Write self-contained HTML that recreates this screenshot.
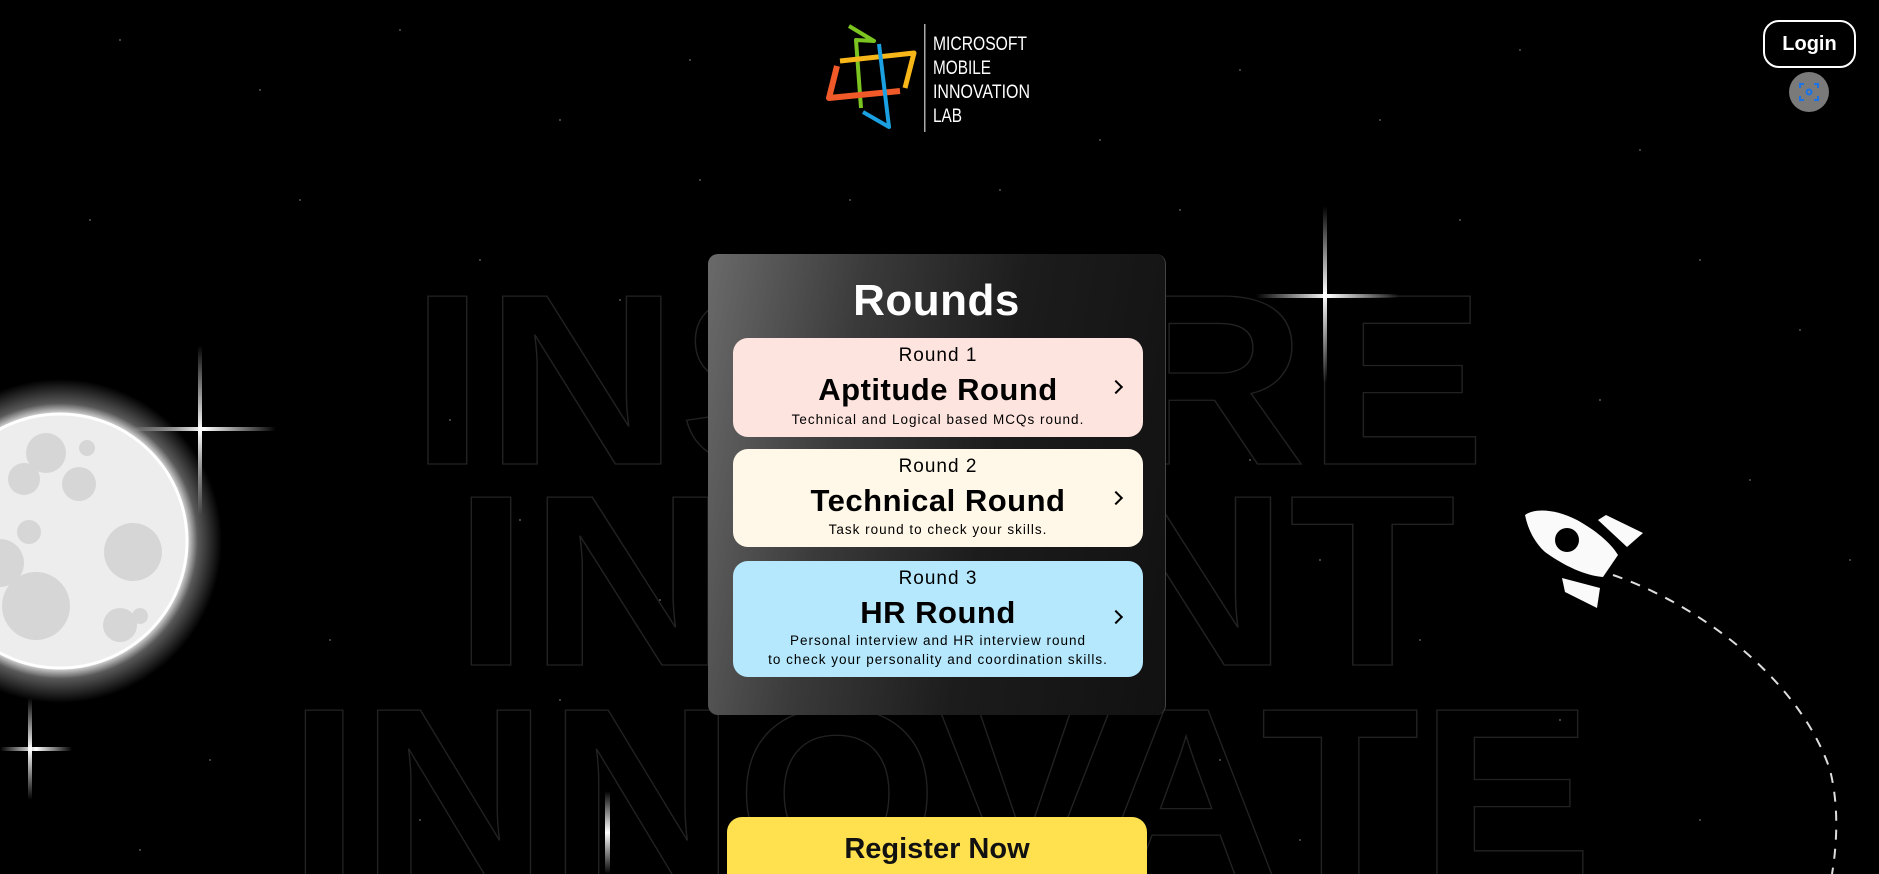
<!DOCTYPE html>
<html><head><meta charset="utf-8"><style>
*{margin:0;padding:0;box-sizing:border-box}
html,body{width:1879px;height:874px;overflow:hidden}
body{background:#000;font-family:"Liberation Sans",sans-serif;position:relative}
.abs{position:absolute}
.card{left:708px;top:254px;width:458px;height:461px;border-radius:10px;background:linear-gradient(100deg,#6a6a6a 0%,#3a3a3a 30%,#1c1c1c 60%,#111 100%);border-right:1px solid #444}
.card h1{position:absolute;top:22px;width:100%;text-align:center;color:#fff;font-size:44px;font-weight:bold;letter-spacing:0.5px}
.box{position:absolute;left:25px;width:410px;border-radius:15px;text-align:center;color:#000}
.box .r{font-size:19px;letter-spacing:1px;position:absolute;width:100%}
.box .t{font-size:31px;font-weight:bold;position:absolute;width:100%;letter-spacing:0.5px}
.box .d{font-size:13.5px;letter-spacing:1px;position:absolute;width:100%;line-height:19px}
.chev{position:absolute;right:22px;width:10px;height:10px;border-right:2.5px solid #000;border-top:2.5px solid #000;transform:rotate(45deg)}
</style></head><body>
<svg class="abs" style="left:0;top:0" width="1879" height="874">
<defs>
<radialGradient id="glow"><stop offset="0.78" stop-color="#fff" stop-opacity="0.9"/><stop offset="0.85" stop-color="#fff" stop-opacity="0.35"/><stop offset="1" stop-color="#fff" stop-opacity="0"/></radialGradient>
<linearGradient id="sv" x1="0" y1="0" x2="0" y2="1"><stop offset="0" stop-color="#fff" stop-opacity="0"/><stop offset="0.5" stop-color="#fff"/><stop offset="1" stop-color="#fff" stop-opacity="0"/></linearGradient>
<linearGradient id="sh" x1="0" y1="0" x2="1" y2="0"><stop offset="0" stop-color="#fff" stop-opacity="0"/><stop offset="0.5" stop-color="#fff"/><stop offset="1" stop-color="#fff" stop-opacity="0"/></linearGradient>
</defs>
<g fill="#555">
<circle cx="120" cy="40" r="1"/><circle cx="260" cy="90" r="1"/><circle cx="400" cy="30" r="1"/><circle cx="560" cy="120" r="1"/><circle cx="690" cy="60" r="1"/><circle cx="980" cy="40" r="1"/><circle cx="1100" cy="140" r="1"/><circle cx="1240" cy="70" r="1"/><circle cx="1380" cy="120" r="1"/><circle cx="1520" cy="50" r="1"/><circle cx="1640" cy="150" r="1"/><circle cx="1700" cy="260" r="1"/><circle cx="1800" cy="330" r="1"/><circle cx="1600" cy="400" r="1"/><circle cx="1750" cy="480" r="1"/><circle cx="1850" cy="560" r="1"/><circle cx="1560" cy="720" r="1"/><circle cx="1700" cy="820" r="1"/><circle cx="300" cy="200" r="1"/><circle cx="480" cy="260" r="1"/><circle cx="90" cy="220" r="1"/><circle cx="330" cy="640" r="1"/><circle cx="210" cy="760" r="1"/><circle cx="420" cy="820" r="1"/><circle cx="140" cy="850" r="1"/><circle cx="520" cy="520" r="1"/><circle cx="620" cy="300" r="1"/><circle cx="1250" cy="460" r="1"/><circle cx="1320" cy="560" r="1"/><circle cx="1420" cy="640" r="1"/><circle cx="1220" cy="760" r="1"/><circle cx="1460" cy="220" r="1"/><circle cx="700" cy="180" r="1"/><circle cx="850" cy="200" r="1"/><circle cx="1000" cy="190" r="1"/><circle cx="1180" cy="210" r="1"/><circle cx="450" cy="420" r="1"/><circle cx="560" cy="700" r="1"/><circle cx="660" cy="600" r="1"/><circle cx="1300" cy="840" r="1"/>
</g>
<g fill="none" stroke="#222" stroke-width="1.3" font-family="Liberation Sans" font-weight="bold" font-size="244">
<text x="410" y="464" textLength="1076" lengthAdjust="spacingAndGlyphs">INSPIRE</text>
<text x="453" y="665" textLength="1003" lengthAdjust="spacingAndGlyphs">INVENT</text>
<text x="288" y="878" textLength="1305" lengthAdjust="spacingAndGlyphs">INNOVATE</text>
</g>
<circle cx="60" cy="541" r="162" fill="url(#glow)"/>
<circle cx="60" cy="541" r="127" fill="#ededed" stroke="#fff" stroke-width="3"/>
<g fill="#d6d6d6">
<circle cx="46" cy="453" r="20"/><circle cx="24" cy="479" r="16"/><circle cx="79" cy="484" r="17"/><circle cx="87" cy="448" r="8"/><circle cx="29" cy="532" r="12"/><circle cx="133" cy="552" r="29"/><circle cx="36" cy="606" r="34"/><circle cx="0" cy="563" r="24"/><circle cx="120" cy="625" r="17"/><circle cx="140" cy="616" r="8"/>
</g>
<rect x="198" y="345" width="4" height="170" fill="url(#sv)"/><rect x="132" y="427" width="144" height="4" fill="url(#sh)"/>
<rect x="28" y="698" width="4" height="102" fill="url(#sv)"/><rect x="0" y="747" width="72" height="4" fill="url(#sh)"/>
<rect x="1323" y="206" width="4" height="177" fill="url(#sv)"/><rect x="1256" y="294" width="143" height="4" fill="url(#sh)"/>
<rect x="605" y="791" width="5" height="83" fill="url(#sv)"/>
<path d="M1613 575 C1700 605 1800 680 1830 770 C1840 810 1836 850 1832 874" fill="none" stroke="#ddd" stroke-width="2" stroke-dasharray="10 9"/>
<g fill="#fafafa">
<path d="M1525 515 C1535 508 1555 509 1577 520 C1595 530 1610 542 1618 555 L1603 577 C1590 576 1570 570 1545 552 C1535 543 1528 530 1525 515 Z"/>
<path d="M1598 520 L1606 515 L1643 533 L1627 547 Z"/>
<path d="M1562 578 L1600 588 L1597 608 L1565 592 Z"/>
</g>
<circle cx="1567" cy="540" r="12" fill="#000"/>
<g fill="none" stroke-linejoin="round">
<path d="M849 26 L874 41 L856 40 L861 108" stroke="#7cc520" stroke-width="4"/>
<path d="M840 61 L914 53 L905 88" stroke="#f7b718" stroke-width="5"/>
<path d="M837 66 L829 98 L900 91" stroke="#f05a28" stroke-width="6"/>
<path d="M879 44 L889 127 L863 112" stroke="#1ba1e2" stroke-width="4"/>
</g>
<rect x="924" y="24" width="1.5" height="108" fill="#aaa"/>
<g fill="#fff" font-family="Liberation Sans" font-size="19">
<text x="933" y="50" textLength="94" lengthAdjust="spacingAndGlyphs">MICROSOFT</text>
<text x="933" y="74" textLength="58" lengthAdjust="spacingAndGlyphs">MOBILE</text>
<text x="933" y="98" textLength="97" lengthAdjust="spacingAndGlyphs">INNOVATION</text>
<text x="933" y="122" textLength="29" lengthAdjust="spacingAndGlyphs">LAB</text>
</g>
<circle cx="1809" cy="92" r="20" fill="#7a7a7a"/>
<g fill="none" stroke="#1a73e8" stroke-width="2"><path d="M1800 88v-4h4M1814 84h4v4M1818 96v4h-4M1804 100h-4v-4"/><circle cx="1809" cy="92" r="2.5"/></g>
</svg>
<div class="abs" style="left:1763px;top:20px;width:93px;height:48px;border:2px solid #fff;border-radius:16px;color:#fff;font-weight:bold;font-size:20px;text-align:center;line-height:44px">Login</div>
<div class="abs card">
<h1>Rounds</h1>
<div class="box" style="top:84px;height:99px;background:#fee4df">
<div class="r" style="top:7px">Round 1</div><div class="t" style="top:34px">Aptitude Round</div><div class="d" style="top:72px">Technical and Logical based MCQs round.</div><div class="chev" style="top:44px"></div></div>
<div class="box" style="top:195px;height:98px;background:#fff8e8">
<div class="r" style="top:7px">Round 2</div><div class="t" style="top:34px">Technical Round</div><div class="d" style="top:71px">Task round to check your skills.</div><div class="chev" style="top:44px"></div></div>
<div class="box" style="top:307px;height:116px;background:#b5e8fd">
<div class="r" style="top:7px">Round 3</div><div class="t" style="top:34px">HR Round</div><div class="d" style="top:70px">Personal interview and HR interview round<br>to check your personality and coordination skills.</div><div class="chev" style="top:51px"></div></div>
</div>
<div class="abs" style="left:727px;top:817px;width:420px;height:57px;background:#ffe14f;border-radius:15px 15px 0 0;text-align:center;font-weight:bold;font-size:29px;color:#111;padding-top:16px">Register Now</div>
</body></html>
